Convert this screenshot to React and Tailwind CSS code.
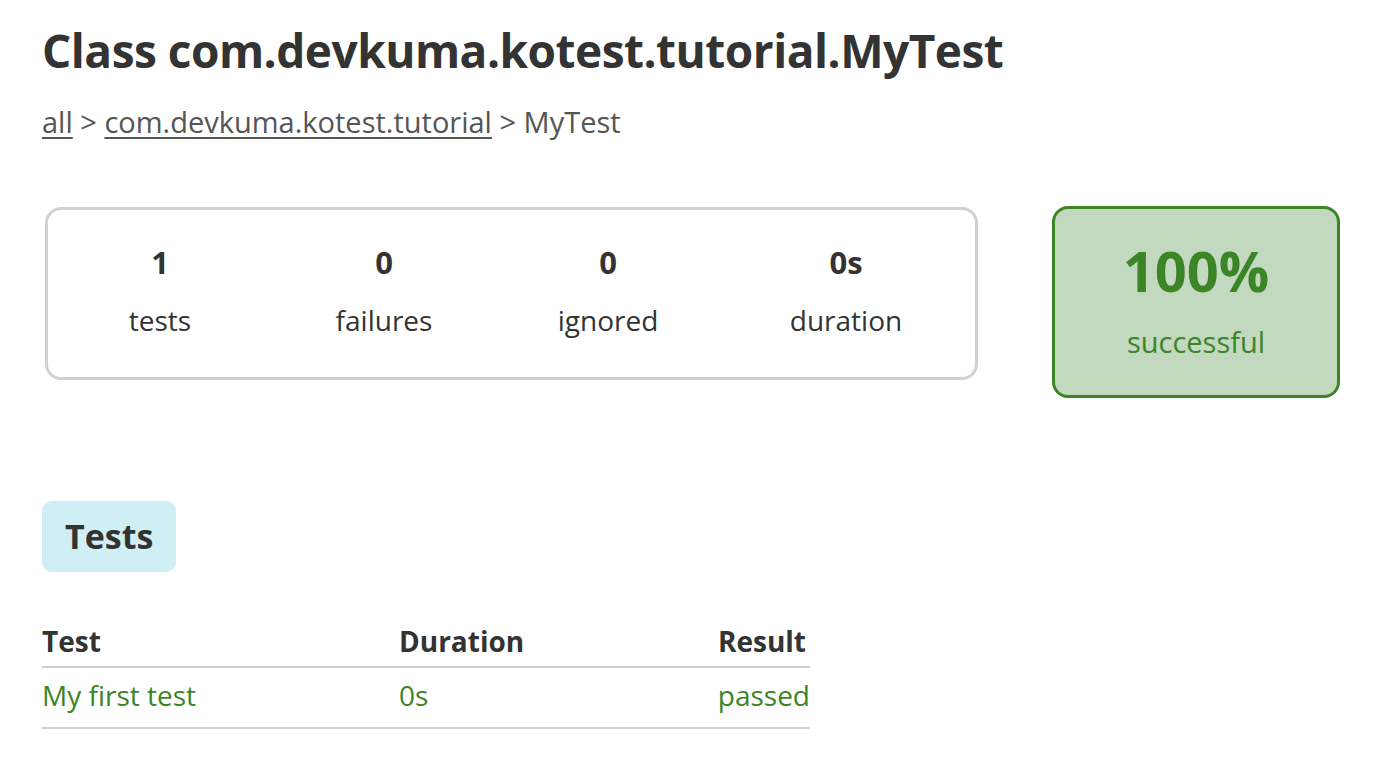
import React from 'react';

const counters = [
  { value: '1', label: 'tests', w: 'w-[224px]' },
  { value: '0', label: 'failures', w: 'w-[224px]' },
  { value: '0', label: 'ignored', w: 'w-[224px]' },
  { value: '0s', label: 'duration', w: 'w-[252px]' },
];

export default function App() {
  return (
    <div
      className="min-h-screen bg-white pl-[42px] pr-[20px] pt-[22px] text-[#333]"
      style={{ fontFamily: '"Open Sans", "Noto Sans CJK KR", sans-serif' }}
    >
      <h1 className="text-[46px] font-bold leading-[56px] tracking-[-0.5px] text-[#333]">
        Class com.devkuma.kotest.tutorial.MyTest
      </h1>

      {/* breadcrumb */}
      <div className="mt-[24px] text-[29px] leading-[40px] text-[#555]">
        <a className="underline decoration-2 underline-offset-4">all</a>
        {' > '}
        <a className="underline decoration-2 underline-offset-4">com.devkuma.kotest.tutorial</a>
        {' > MyTest'}
      </div>

      {/* summary */}
      <div className="mt-[65px] flex items-start">
        <div className="ml-[3px] flex h-[173px] w-[933px] shrink-0 items-center rounded-[16px] border-[3px] border-[#d0d0d0]">
          {counters.map((c, i) => (
            <div key={i} className={`flex ${c.w} flex-col items-center pb-[7px]`}>
              <div className="text-[31px] font-bold leading-[40px] text-[#333]">{c.value}</div>
              <div className="mt-[20px] text-[28px] leading-[36px] text-[#333]">{c.label}</div>
            </div>
          ))}
        </div>
        <div className="ml-[74px] -mt-[1px] flex h-[192px] w-[288px] shrink-0 flex-col items-center rounded-[16px] border-[3px] border-[#3c8527] bg-[#c2d9bf] pt-[29px]">
          <div className="text-[56px] font-bold leading-[64px] text-[#3c8527]">100%</div>
          <div className="mt-[22px] text-[29px] leading-[36px] text-[#3c8527]">successful</div>
        </div>
      </div>

      {/* tabs */}
      <div className="mt-[103px]">
        <div className="inline-block rounded-[10px] bg-[#d0eff4] px-[23px] py-[12px] text-[34px] font-bold leading-[47px] text-[#333]">
          Tests
        </div>
      </div>

      {/* table */}
      <table className="mt-[49px] w-[768px] border-collapse text-[28px]">
        <thead>
          <tr className="border-b-[2px] border-[#d0d0d0]">
            <th className="w-[357px] pb-[5px] text-left font-bold leading-[40px]">Test</th>
            <th className="pb-[5px] text-left font-bold leading-[40px]">Duration</th>
            <th className="pb-[5px] pr-[4px] text-right font-bold leading-[40px]">Result</th>
          </tr>
        </thead>
        <tbody>
          <tr className="border-b-[2px] border-[#d0d0d0] text-[#3c8527]">
            <td className="pt-[7px] pb-[12px] leading-[40px]">My first test</td>
            <td className="pt-[7px] pb-[12px] leading-[40px]">0s</td>
            <td className="pt-[7px] pb-[12px] text-right leading-[40px]">passed</td>
          </tr>
        </tbody>
      </table>
    </div>
  );
}
